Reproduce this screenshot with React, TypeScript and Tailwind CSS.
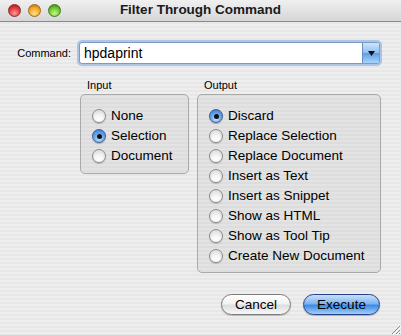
import { useState } from 'react';

const inputOptions = ['None', 'Selection', 'Document'];
const outputOptions = [
  'Discard',
  'Replace Selection',
  'Replace Document',
  'Insert as Text',
  'Insert as Snippet',
  'Show as HTML',
  'Show as Tool Tip',
  'Create New Document',
];

function Radio({ checked }: { checked: boolean }) {
  return checked ? (
    <span className="relative flex h-[14px] w-[14px] shrink-0 items-center justify-center rounded-full border border-[#3a5f9a] bg-[radial-gradient(circle_at_50%_75%,#c4e2ff_0%,#6fa9ec_45%,#2f6fcf_100%)] shadow-[0_1px_1px_rgba(0,0,0,0.25)]">
      <span className="h-[5px] w-[5px] rounded-full bg-[#111]" />
    </span>
  ) : (
    <span className="h-[14px] w-[14px] shrink-0 rounded-full border border-[#8c8c8c] bg-[radial-gradient(circle_at_50%_80%,#ffffff_0%,#f4f4f4_40%,#d2d2d2_100%)] shadow-[0_1px_1px_rgba(0,0,0,0.2)]" />
  );
}

function RadioGroup({
  label,
  options,
  value,
  onChange,
  className,
  boxClass,
}: {
  label: string;
  options: string[];
  value: string;
  onChange: (v: string) => void;
  className: string;
  boxClass: string;
}) {
  return (
    <div className={className}>
      <div className="h-[17px] pl-[7px] text-[11px] leading-[17px] text-black">{label}</div>
      <div
        className={
          'flex flex-col gap-[4px] rounded-[5px] border border-[#a9a9a9] bg-black/[0.045] px-[11px] pt-[13px] ' +
          boxClass
        }
      >
        {options.map(opt => (
          <label
            key={opt}
            className="flex h-[16px] cursor-default items-center gap-[5px] text-[13.5px] leading-[16px] text-black"
            onClick={() => onChange(opt)}
          >
            <Radio checked={opt === value} />
            <span>{opt}</span>
          </label>
        ))}
      </div>
    </div>
  );
}

export default function App() {
  const [input, setInput] = useState('Selection');
  const [output, setOutput] = useState('Discard');
  const [command, setCommand] = useState('hpdaprint');

  return (
    <div
      className="relative flex h-[335px] w-[401px] flex-col overflow-hidden bg-[repeating-linear-gradient(to_bottom,#eeeeee_0px,#eeeeee_2px,#e7e7e7_2px,#e7e7e7_4px)]"
      style={{ fontFamily: '"Liberation Sans", Arial, sans-serif' }}
    >
      {/* title bar */}
      <div className="relative flex h-[22px] shrink-0 items-center border-b border-[#8a8a8a] bg-[linear-gradient(to_bottom,#f0f0f0,#d6d6d6)]">
        <div className="flex gap-[7px] pl-[8px]">
          <span className="h-[13px] w-[13px] rounded-full border border-[#8a2a2a] bg-[radial-gradient(circle_at_50%_75%,#ff9a9a_0%,#e23a3a_55%,#9c1414_100%)]" />
          <span className="h-[13px] w-[13px] rounded-full border border-[#9a6a1a] bg-[radial-gradient(circle_at_50%_75%,#ffe08a_0%,#f5a623_55%,#b06a0a_100%)]" />
          <span className="h-[13px] w-[13px] rounded-full border border-[#3f7a1a] bg-[radial-gradient(circle_at_50%_75%,#c9f58a_0%,#6cc52e_55%,#2e7a0e_100%)]" />
        </div>
        <div className="pointer-events-none absolute inset-x-0 top-0 flex h-[21px] items-center justify-center text-[13.5px] font-bold text-[#1a1a1a]">
          Filter Through Command
        </div>
      </div>

      {/* command row */}
      <div className="mt-[20px] flex h-[22px] items-center">
        <div className="w-[72px] pr-[1px] text-right text-[11px] text-black">Command:</div>
        <div className="ml-[7px] flex h-[22px] w-[301px] items-stretch rounded-[3px] border border-[#7c9ac4] bg-white shadow-[0_0_0_2px_rgba(120,165,225,0.55)]">
          <input
            value={command}
            onChange={e => setCommand(e.target.value)}
            className="min-w-0 flex-1 bg-transparent pl-[4px] text-[14px] text-black outline-none"
            style={{ fontFamily: '"Liberation Sans", Arial, sans-serif' }}
          />
          <div className="flex w-[17px] items-center justify-center rounded-r-[2px] border-l border-[#6d8fbf] bg-[linear-gradient(to_bottom,#cfe4fb_0%,#8ebef0_50%,#5d9fe6_52%,#a8d4fb_100%)]">
            <svg width="7" height="5" viewBox="0 0 7 5">
              <path d="M0 0h7L3.5 5z" fill="#111" />
            </svg>
          </div>
        </div>
      </div>

      {/* groups */}
      <div className="mt-[13px] flex items-start">
        <RadioGroup
          label="Input"
          options={inputOptions}
          value={input}
          onChange={setInput}
          className="ml-[80px] w-[109px]"
          boxClass="h-[80px]"
        />
        <RadioGroup
          label="Output"
          options={outputOptions}
          value={output}
          onChange={setOutput}
          className="ml-[8px] w-[184px]"
          boxClass="h-[179px]"
        />
      </div>

      {/* buttons */}
      <div className="mt-[21px] flex justify-end gap-[12px] pr-[21px]">
        <button className="h-[21px] w-[70px] rounded-full border border-[#7a7a7a] bg-[linear-gradient(to_bottom,#ffffff_0%,#f2f2f2_45%,#dedede_55%,#f7f7f7_100%)] text-[13.5px] text-black shadow-[0_1px_1px_rgba(0,0,0,0.2)]">
          Cancel
        </button>
        <button className="h-[21px] w-[77px] rounded-full border border-[#2a3f8a] bg-[linear-gradient(to_bottom,#c8e0fb_0%,#7fb4ef_45%,#3f8be3_55%,#9fd0fb_100%)] text-[13.5px] text-black shadow-[0_1px_1px_rgba(0,0,0,0.25)]">
          Execute
        </button>
      </div>

      {/* resize grip */}
      <svg className="absolute bottom-0 right-0" width="12" height="12" viewBox="0 0 12 12">
        <path d="M11 3L3 11M11 7L7 11M11 10L10 11" stroke="#8a8a8a" strokeWidth="1" />
        <path d="M12 4L4 12M12 8L8 12" stroke="#ffffff" strokeWidth="1" />
      </svg>
    </div>
  );
}
